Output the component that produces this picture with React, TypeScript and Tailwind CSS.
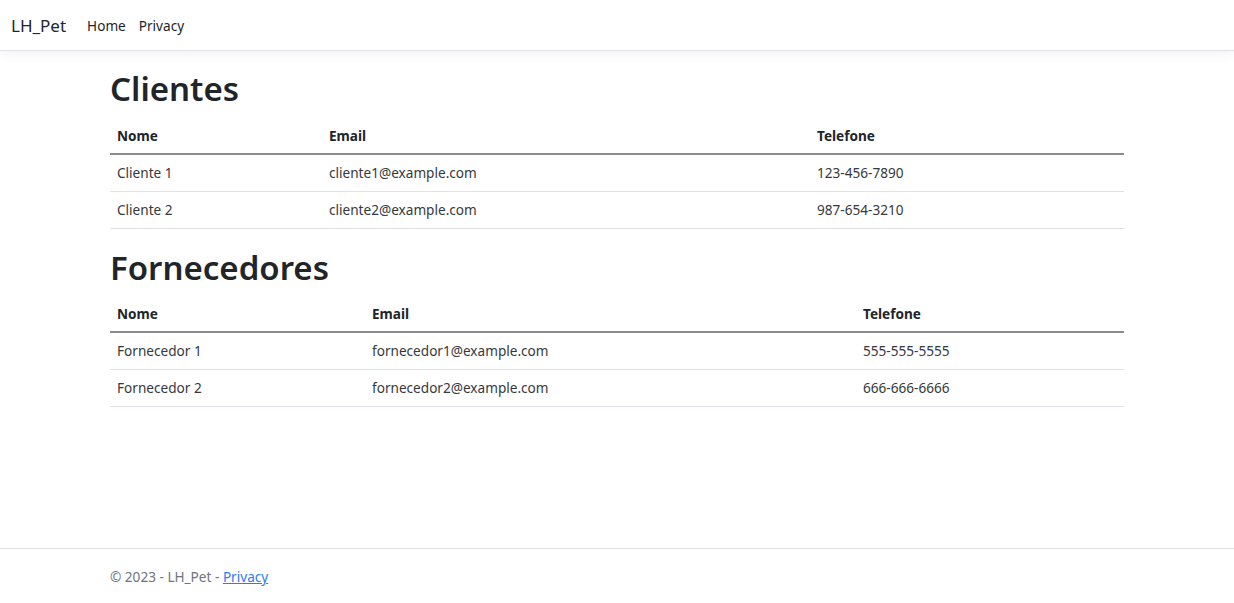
const clientes = [
  { nome: "Cliente 1", email: "cliente1@example.com", tel: "123-456-7890" },
  { nome: "Cliente 2", email: "cliente2@example.com", tel: "987-654-3210" },
];

const fornecedores = [
  { nome: "Fornecedor 1", email: "fornecedor1@example.com", tel: "555-555-5555" },
  { nome: "Fornecedor 2", email: "fornecedor2@example.com", tel: "666-666-6666" },
];

const DataTable = ({ rows, cols }: any) => {
  return (
    <table className="w-full border-collapse mb-[14px] text-[#212529] table-fixed">
      <colgroup>
        <col style={{ width: cols[0] }} />
        <col style={{ width: cols[1] }} />
        <col />
      </colgroup>
      <thead>
        <tr className="border-b-2 border-[#8a8c8e]">
          <th className="text-left font-bold px-[7px] pt-[7px] pb-[6px] leading-[23px]">Nome</th>
          <th className="text-left font-bold px-[7px] pt-[7px] pb-[6px] leading-[23px]">Email</th>
          <th className="text-left font-bold px-[7px] pt-[7px] pb-[6px] leading-[23px]">Telefone</th>
        </tr>
      </thead>
      <tbody className="text-[#35393d]">
        {rows.map((r: any) => (
          <tr key={r.nome} className="border-b border-[#dee2e6]">
            <td className="px-[7px] py-[7px] leading-[22px]">{r.nome}</td>
            <td className="px-[7px] py-[7px] leading-[22px]">{r.email}</td>
            <td className="px-[7px] py-[7px] leading-[22px]">{r.tel}</td>
          </tr>
        ))}
      </tbody>
    </table>
  );
};

export default function App() {
  return (
    <div className="min-h-screen flex flex-col bg-white text-[13.6px] text-[#212529] font-['Segoe_UI','Noto_Sans',sans-serif]">
      <header className="h-[51px] flex items-center border-b border-[#dee2e6] shadow-[0_4px_11px_rgba(0,0,0,0.05)] mb-[14px]">
        <nav className="flex items-center pl-[11px] pt-[2px]">
          <span className="text-[17px] mr-[21px]">LH_Pet</span>
          <a className="text-[#212529] mr-[13px]">Home</a>
          <a className="text-[#212529]">Privacy</a>
        </nav>
      </header>

      <main className="mx-[110px] w-[1014px]">
        <h1 className="text-[33px] font-semibold leading-[43px] mb-[7px] pt-[2px]">Clientes</h1>
        <DataTable rows={clientes} cols={[212, 488]} />
        <h1 className="text-[33px] font-semibold leading-[43px] mb-[6px] pt-[3px]">Fornecedores</h1>
        <DataTable rows={fornecedores} cols={[255, 491]} />
      </main>

      <footer className="mt-auto h-[55px] border-t border-[#dee2e6] flex items-center text-[#6c757d] pt-[3px]">
        <div className="pl-[110px]">
          © 2023 - LH_Pet - <a className="text-[#2f7bf0] underline">Privacy</a>
        </div>
      </footer>
    </div>
  );
}
